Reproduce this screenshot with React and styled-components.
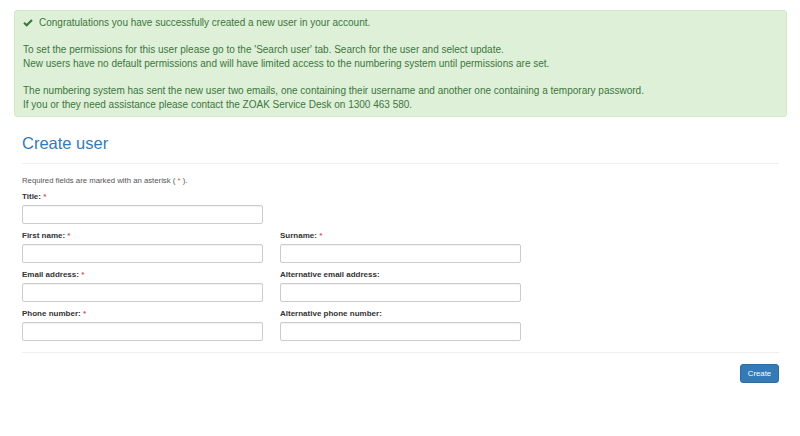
import React from 'react';
import styled, { createGlobalStyle } from 'styled-components';

const GlobalStyle = createGlobalStyle`
  html, body {
    margin: 0;
    padding: 0;
    background: #fff;
    font-family: "Liberation Sans", Arial, sans-serif;
    color: #333;
  }
`;

const Page = styled.div`
  width: 800px;
  padding: 10px 13px 0 14px;
  box-sizing: border-box;
`;

const Alert = styled.div`
  background: #dff0d8;
  border: 1px solid #d6e9c6;
  border-radius: 3px;
  color: #3c763d;
  font-size: 10px;
  line-height: 13.6px;
  padding: 5px 8px 5px 8px;
`;

const AlertLine = styled.p`
  margin: 0 0 ${props => (props.last ? 0 : 13.6)}px 0;
  display: flex;
  flex-direction: column;
`;

const AlertHead = styled.span`
  display: flex;
  align-items: center;
  gap: 6px;
`;

const Content = styled.div`
  padding: 0 8px;
`;

const Heading = styled.h1`
  margin: 14px 0 0 0;
  font-size: 16.5px;
  font-weight: normal;
  color: #337ab7;
  line-height: 24px;
  padding-bottom: 8px;
  border-bottom: 1px solid #eee;
`;

const Note = styled.p`
  margin: 12px 0 5px 0;
  font-size: 7.75px;
  line-height: 10px;
  color: #555;
`;

const Star = styled.span`
  color: #d9534f;
`;

const Grid = styled.div`
  display: grid;
  grid-template-columns: 241px 241px;
  column-gap: 17px;
  row-gap: 6px;
  padding-bottom: 11px;
  border-bottom: 1px solid #eee;
`;

const Field = styled.div`
  grid-column: ${props => props.col || 'auto'};
  display: flex;
  flex-direction: column;
`;

const Label = styled.label`
  font-size: 8px;
  font-weight: bold;
  line-height: 11px;
  margin-bottom: 3px;
  color: #333;
`;

const Input = styled.input`
  height: 19px;
  box-sizing: border-box;
  border: 1px solid #ccc;
  border-radius: 2px;
  box-shadow: inset 0 1px 1px rgba(0, 0, 0, 0.06);
  padding: 2px 6px;
  font-size: 8px;
`;

const Actions = styled.div`
  display: flex;
  justify-content: flex-end;
  padding-top: 11px;
`;

const Button = styled.button`
  background: #337ab7;
  border: 1px solid #2e6da4;
  border-radius: 3px;
  color: #fff;
  font-family: "Liberation Sans", Arial, sans-serif;
  font-size: 7.75px;
  height: 19px;
  width: 39px;
  padding: 0;
`;

const Check = () => (
  <svg width="10" height="8" viewBox="0 0 10 8">
    <path d="M0.3 4.4 L1.8 2.9 L3.7 4.8 L8.2 0.3 L9.7 1.8 L3.7 7.8 Z" fill="#3c763d" />
  </svg>
);

const Req = () => (
  <>
    {' '}
    <Star>*</Star>
  </>
);

class App extends React.Component {
  render() {
    return (
      <Page>
        <GlobalStyle />
        <Alert>
          <AlertLine>
            <AlertHead>
              <Check />
              Congratulations you have successfully created a new user in your account.
            </AlertHead>
          </AlertLine>
          <AlertLine>
            <span>To set the permissions for this user please go to the 'Search user' tab. Search for the user and select update.</span>
            <span>New users have no default permissions and will have limited access to the numbering system until permissions are set.</span>
          </AlertLine>
          <AlertLine last>
            <span>The numbering system has sent the new user two emails, one containing their username and another one containing a temporary password.</span>
            <span>If you or they need assistance please contact the ZOAK Service Desk on 1300 463 580.</span>
          </AlertLine>
        </Alert>
        <Content>
          <Heading>Create user</Heading>
          <Note>
            Required fields are marked with an asterisk ( <Star>*</Star> ).
          </Note>
          <Grid>
            <Field col="1">
              <Label>Title:<Req /></Label>
              <Input type="text" />
            </Field>
            <Field col="1">
              <Label>First name:<Req /></Label>
              <Input type="text" />
            </Field>
            <Field col="2">
              <Label>Surname:<Req /></Label>
              <Input type="text" />
            </Field>
            <Field col="1">
              <Label>Email address:<Req /></Label>
              <Input type="text" />
            </Field>
            <Field col="2">
              <Label>Alternative email address:</Label>
              <Input type="text" />
            </Field>
            <Field col="1">
              <Label>Phone number:<Req /></Label>
              <Input type="text" />
            </Field>
            <Field col="2">
              <Label>Alternative phone number:</Label>
              <Input type="text" />
            </Field>
          </Grid>
          <Actions>
            <Button>Create</Button>
          </Actions>
        </Content>
      </Page>
    );
  }
}

export default App;
